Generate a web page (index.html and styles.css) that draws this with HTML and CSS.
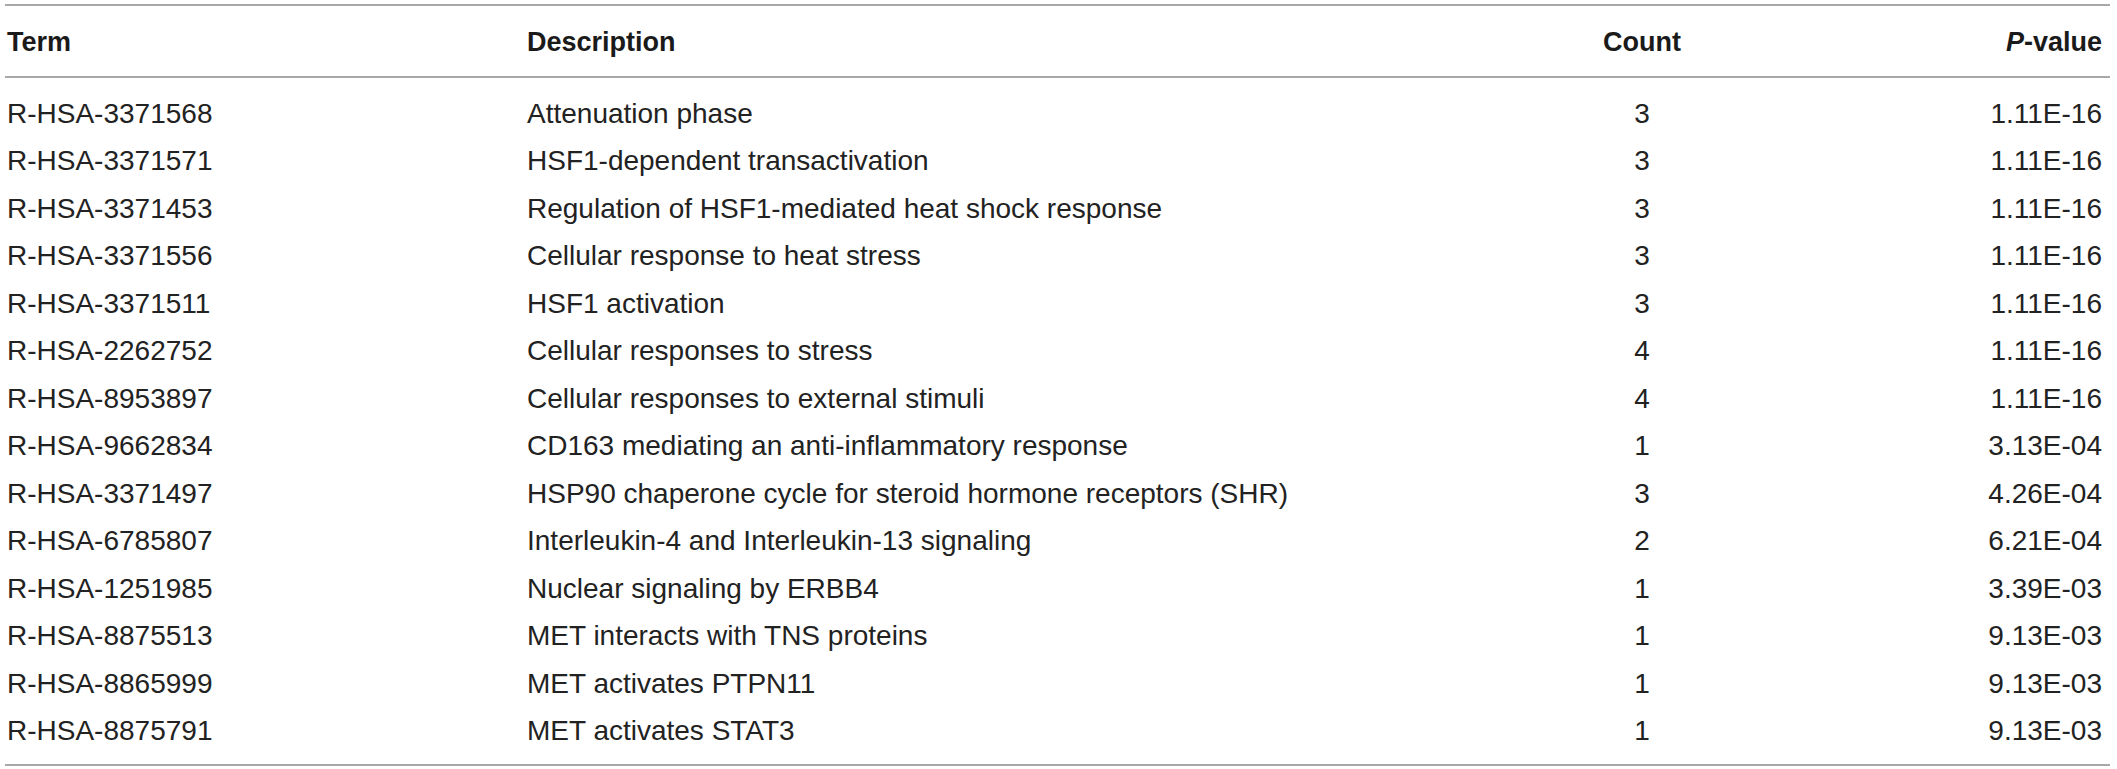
FILE: index.html
```html
<!DOCTYPE html>
<html>
<head>
<meta charset="utf-8">
<link rel="stylesheet" href="styles.css">
</head>
<body>
<div class="table">
  <div class="row head">
    <div class="c term">Term</div>
    <div class="c desc">Description</div>
    <div class="c count">Count</div>
    <div class="c pval"><i>P</i>-value</div>
  </div>
  <div class="body">
    <div class="row"><div class="c term">R-HSA-3371568</div><div class="c desc">Attenuation phase</div><div class="c count">3</div><div class="c pval">1.11E-16</div></div>
    <div class="row"><div class="c term">R-HSA-3371571</div><div class="c desc">HSF1-dependent transactivation</div><div class="c count">3</div><div class="c pval">1.11E-16</div></div>
    <div class="row"><div class="c term">R-HSA-3371453</div><div class="c desc">Regulation of HSF1-mediated heat shock response</div><div class="c count">3</div><div class="c pval">1.11E-16</div></div>
    <div class="row"><div class="c term">R-HSA-3371556</div><div class="c desc">Cellular response to heat stress</div><div class="c count">3</div><div class="c pval">1.11E-16</div></div>
    <div class="row"><div class="c term">R-HSA-3371511</div><div class="c desc">HSF1 activation</div><div class="c count">3</div><div class="c pval">1.11E-16</div></div>
    <div class="row"><div class="c term">R-HSA-2262752</div><div class="c desc">Cellular responses to stress</div><div class="c count">4</div><div class="c pval">1.11E-16</div></div>
    <div class="row"><div class="c term">R-HSA-8953897</div><div class="c desc">Cellular responses to external stimuli</div><div class="c count">4</div><div class="c pval">1.11E-16</div></div>
    <div class="row"><div class="c term">R-HSA-9662834</div><div class="c desc">CD163 mediating an anti-inflammatory response</div><div class="c count">1</div><div class="c pval">3.13E-04</div></div>
    <div class="row"><div class="c term">R-HSA-3371497</div><div class="c desc">HSP90 chaperone cycle for steroid hormone receptors (SHR)</div><div class="c count">3</div><div class="c pval">4.26E-04</div></div>
    <div class="row"><div class="c term">R-HSA-6785807</div><div class="c desc">Interleukin-4 and Interleukin-13 signaling</div><div class="c count">2</div><div class="c pval">6.21E-04</div></div>
    <div class="row"><div class="c term">R-HSA-1251985</div><div class="c desc">Nuclear signaling by ERBB4</div><div class="c count">1</div><div class="c pval">3.39E-03</div></div>
    <div class="row"><div class="c term">R-HSA-8875513</div><div class="c desc">MET interacts with TNS proteins</div><div class="c count">1</div><div class="c pval">9.13E-03</div></div>
    <div class="row"><div class="c term">R-HSA-8865999</div><div class="c desc">MET activates PTPN11</div><div class="c count">1</div><div class="c pval">9.13E-03</div></div>
    <div class="row"><div class="c term">R-HSA-8875791</div><div class="c desc">MET activates STAT3</div><div class="c count">1</div><div class="c pval">9.13E-03</div></div>
  </div>
</div>
</body>
</html>
```
FILE: styles.css
```css
html, body {
  margin: 0;
  padding: 0;
  background: #ffffff;
}
body {
  padding: 4px 7px 0 5px;
  font-family: "Liberation Sans", Arial, sans-serif;
  color: #222222;
}
.table {
  width: 2105px;
  border-top: 2px solid #a8a8a8;
  border-bottom: 2px solid #a8a8a8;
}
.row {
  display: grid;
  grid-template-columns: 520px 1055px 124px 1fr;
  height: 47.5px;
  line-height: 47.5px;
  font-size: 28px;
  white-space: nowrap;
}
.head {
  font-weight: bold;
  font-size: 27px;
  color: #1a1a1a;
  padding: 13px 0 9px 0;
  border-bottom: 2px solid #a8a8a8;
}
.body {
  padding: 12px 0 9px 0;
}
.c.term, .c.desc {
  padding-left: 2px;
}
.c.count {
  text-align: center;
}
.c.pval {
  text-align: right;
  padding-right: 8px;
}
.pval i {
  font-style: italic;
}
```
